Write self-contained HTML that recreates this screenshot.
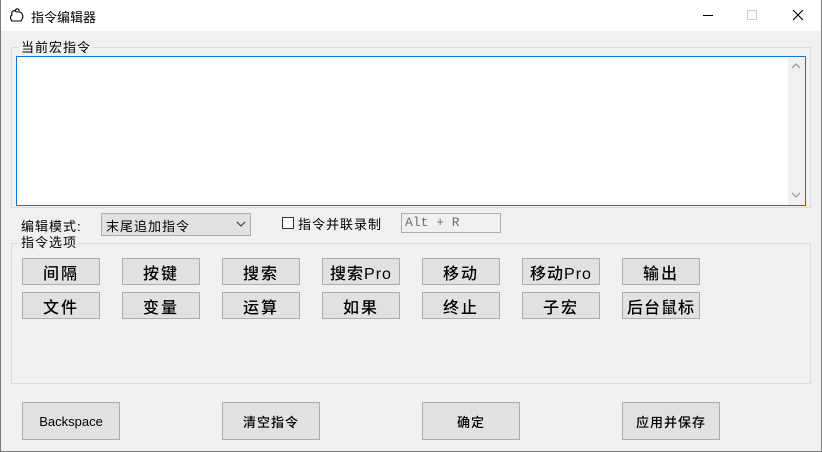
<!DOCTYPE html>
<html><head><meta charset="utf-8"><style>
*{box-sizing:border-box;margin:0;padding:0}
body{width:822px;height:452px;overflow:hidden;background:#f0f0f0;font-family:"Liberation Sans","Noto Sans CJK SC",sans-serif;position:relative;color:#000}
.a{position:absolute}
.win{left:0;top:0;width:822px;height:452px;border:1px solid #7a7a7a;border-top:none}
.title{left:0;top:0;width:822px;height:31px;background:#fff;border-left:1px solid #7a7a7a;border-right:1px solid #7a7a7a}
.grp{border:1px solid #dcdcdc}
.lg{background:#f0f0f0;font-size:13px;padding:0 2px;line-height:14px;letter-spacing:1px}
.btn{background:#e1e1e1;border:1px solid #adadad;font-size:16px;font-weight:500;display:flex;align-items:center;justify-content:center;letter-spacing:2px;width:78px;height:27px}
.bb{width:98px;height:38px;font-size:13px;letter-spacing:0}
</style></head><body>
<div class="a title"></div>
<div class="a win"></div>
<svg class="a" style="left:9px;top:7px" width="16" height="16" viewBox="0 0 16 16"><path d="M3 14 C1 12 1 9 3 8 C2 5 4 3 6 4 C7 1 11 1 10 5 C13 5 15 9 13 12 L12 14 Z M6 4 C7 5 8 5 9 5" fill="none" stroke="#000" stroke-width="1.1"/></svg>
<div class="a" style="left:31px;top:7px;font-size:13px">指令编辑器</div>
<div class="a" style="left:703px;top:15px;width:10px;height:1px;background:#000"></div>
<div class="a" style="left:747px;top:10px;width:10px;height:10px;border:1px solid #ccc"></div>
<svg class="a" style="left:792px;top:9px" width="12" height="12"><path d="M1 1L11 11M11 1L1 11" stroke="#000" stroke-width="1.1"/></svg>

<div class="a grp" style="left:11px;top:47px;width:800px;height:161px"></div>
<div class="a lg" style="left:19px;top:41px">当前宏指令</div>
<div class="a" style="left:16px;top:56px;width:790px;height:150px;background:#fff;border:1px solid #0078d7"></div>
<div class="a" style="left:788px;top:57px;width:17px;height:148px;background:#f0f0f0"></div>
<svg class="a" style="left:791px;top:62px" width="10" height="8"><path d="M1 6L5 2L9 6" fill="none" stroke="#a3a3a3" stroke-width="1.5"/></svg>
<svg class="a" style="left:791px;top:191px" width="10" height="8"><path d="M1 2L5 6L9 2" fill="none" stroke="#a3a3a3" stroke-width="1.5"/></svg>

<div class="a" style="left:21px;top:216px;font-size:13px;letter-spacing:1px">编辑模式:</div>
<div class="a" style="left:101px;top:213px;width:150px;height:23px;background:#e1e1e1;border:1px solid #adadad;font-size:13px;padding:2px 0 0 4px;letter-spacing:1px">末尾追加指令</div>
<svg class="a" style="left:236px;top:221px" width="10" height="7"><path d="M1 1L5 5L9 1" fill="none" stroke="#333" stroke-width="1"/></svg>
<div class="a" style="left:282px;top:217px;width:12px;height:12px;border:1px solid #333;background:#fff"></div>
<div class="a" style="left:298px;top:214px;font-size:13px;letter-spacing:1px">指令并联录制</div>
<div class="a" style="left:401px;top:213px;width:100px;height:20px;border:1px solid #adadad;background:#f0f0f0;font-family:'Liberation Mono',monospace;font-size:13px;color:#6d6d6d;padding:1px 0 0 3px">Alt + R</div>

<div class="a grp" style="left:11px;top:243px;width:800px;height:141px"></div>
<div class="a lg" style="left:19px;top:236px">指令选项</div>

<div class="a btn" style="left:22px;top:258px">间隔</div>
<div class="a btn" style="left:122px;top:258px">按键</div>
<div class="a btn" style="left:222px;top:258px">搜索</div>
<div class="a btn" style="left:322px;top:258px;letter-spacing:1px">搜索Pro</div>
<div class="a btn" style="left:422px;top:258px">移动</div>
<div class="a btn" style="left:522px;top:258px;letter-spacing:1px">移动Pro</div>
<div class="a btn" style="left:622px;top:258px">输出</div>
<div class="a btn" style="left:22px;top:292px">文件</div>
<div class="a btn" style="left:122px;top:292px">变量</div>
<div class="a btn" style="left:222px;top:292px">运算</div>
<div class="a btn" style="left:322px;top:292px">如果</div>
<div class="a btn" style="left:422px;top:292px">终止</div>
<div class="a btn" style="left:522px;top:292px">子宏</div>
<div class="a btn" style="left:622px;top:292px;letter-spacing:1px">后台鼠标</div>

<div class="a btn bb" style="left:22px;top:402px">Backspace</div>
<div class="a btn bb" style="left:222px;top:402px;letter-spacing:1px">清空指令</div>
<div class="a btn bb" style="left:422px;top:402px;letter-spacing:1px">确定</div>
<div class="a btn bb" style="left:622px;top:402px;letter-spacing:1px">应用并保存</div>
</body></html>
